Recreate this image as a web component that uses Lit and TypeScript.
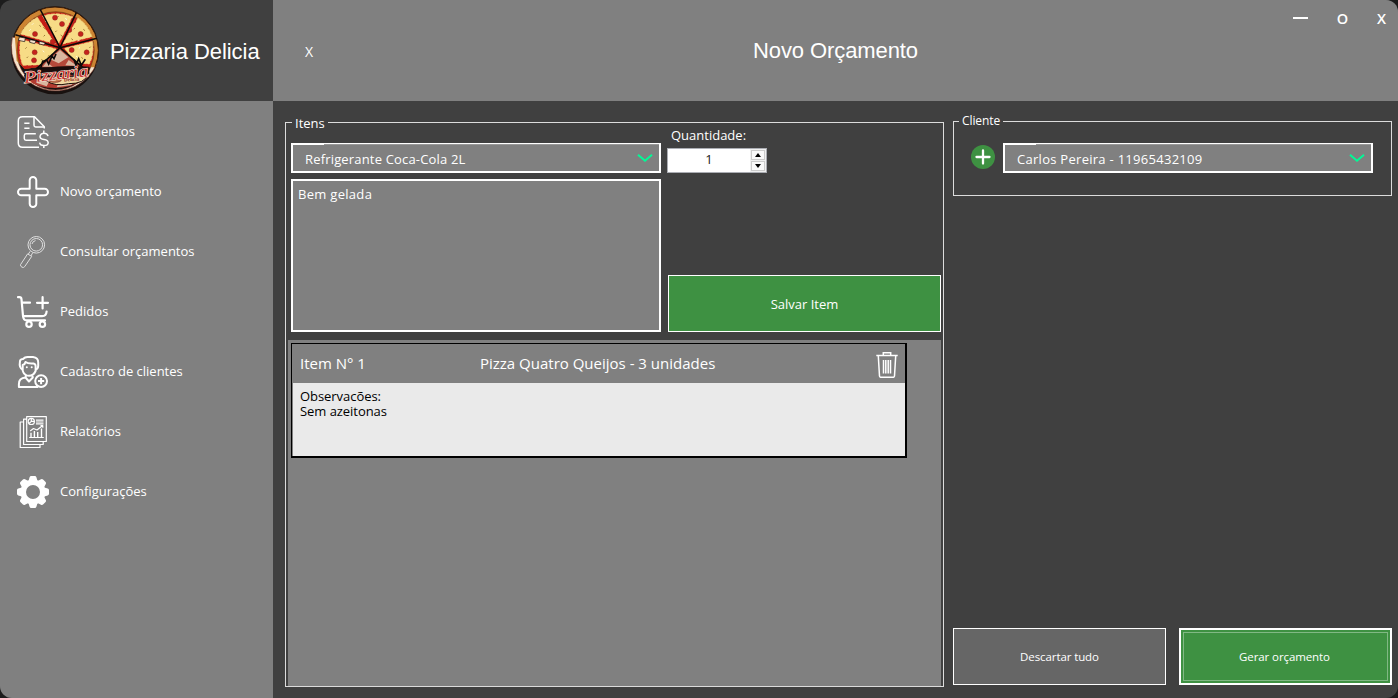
import { LitElement, html, css, svg } from "lit";
import { customElement, property } from "lit/decorators.js";

const icons: Record<string, unknown> = {
  budget: svg`<g stroke-width="1.5"><path d="M22 31.2H5.500Q1.300 31.200 1.300 27V5Q1.300.8 5.500.8H17.500L27.300 10.800V12.500"/><path d="M17 1V9.300Q17 11 18.700 11H27M7.300 7.300H12.500M7.300 12.300H12.500M18.800 17.800H9Q7.300 17.800 7.300 19.500V22.500Q7.300 24.200 9 24.200H20"/><path d="M31 20.200Q30.500 17.200 27 17.200T23 20.500Q23 23 27 23.500T31.200 26.700Q31 29.600 27 29.600T22.700 26.700M26.800 14.500V17M26.800 29.800V32"/></g>`,
  plus: svg`<path stroke-width="2" d="M12.700 4.300a3.300 3.300 0 0 1 6.600 0V12.700H27.700a3.300 3.300 0 0 1 0 6.600H19.300V27.700a3.300 3.300 0 0 1-6.600 0V19.300H4.300a3.300 3.300 0 0 1 0-6.600H12.700Z"/>`,
  search: svg`<g stroke-width="1" opacity=".75"><circle cx="19.300" cy="8.800" r="8.300"/><circle cx="19.300" cy="8.800" r="6.300"/><path d="M15 8Q15.500 5.300 18.500 4.600M13.200 15.300L11.200 18.300M15.700 16.700L13.900 20M10.600 17.900L14.700 20.400L7.700 30.600Q6.700 32 5 31.200T3.500 28.700Z"/></g>`,
  cart: svg`<g stroke-width="2.200" stroke-linecap="round"><path d="M1 1.200H2.500Q4.300 1.300 4.500 3.300L6 20Q6.400 24.400 9.500 24.400H28M5 6.700H13M7 20.200H25Q29.300 20 29.600 15.500M25.600 1.200V12.400M20 6.800H31"/><circle cx="12" cy="28.200" r="2.700"/><circle cx="25.400" cy="28.200" r="2.700"/></g>`,
  client: svg`<g stroke-width="2"><path d="M5.700 13.500Q1.800 12.500 3 5Q3.500 3 6 3Q8 .8 11 1H16Q21.300 1.500 21.200 6.500V10Q21 13 18.600 13.500"/><path d="M5.700 15V9Q8 8.500 8.500 6Q11 8 16.500 7.500Q18.600 8 18.600 10V15Q16.500 19.800 12 19.800T5.700 15M9 19L8.500 21.500L12 25.500L15.800 21.500L15.300 19M8.500 21.500Q1.900 22 1.900 28V31H21"/><circle cx="24.100" cy="25.100" r="5.900"/><path stroke-width="2" d="M24.100 22V28.200M21 25.100H27.200"/></g><circle cx="9.800" cy="11.300" r="1" fill="#fff" stroke="none"/><circle cx="14.700" cy="11.300" r="1" fill="#fff" stroke="none"/>`,
  report: svg`<g stroke-width="1.200"><path d="M9.700.6H29.300V25.500H9.700ZM9.500 3.100H6.600V28.500H26.200V25.800M6.500 6H3.200V31.500H23V28.700"/><circle cx="14.300" cy="5.400" r="3.100"/><path d="M14.300 2.500V5.400H17.300M14.300 5.400L12 7.500M19 4.200H26.500M19 6H26.500M19 7.800H26.500M12.200 21.500H26.800"/><path d="M13.200 15L16.500 12.500L20 14L25.700 9.500M23.500 9.500H25.800V11.800" /><path stroke-width="1.400" d="M14 21V16.800M17.400 21V15M20.700 21V16M24.500 21V12.500"/></g>`,
  gear: svg`<g stroke="none" fill="#fff"><path fill-rule="evenodd" d="M16 3.500a12.500 12.500 0 1 0 0 25a12.500 12.500 0 1 0 0-25M16 9a7 7 0 1 1 0 14a7 7 0 1 1 0-14"/>${[0, 45, 90, 135, 180, 225, 270, 315].map(
    (a) => svg`<path transform="rotate(${a} 16 16)" d="M11 6.500L12.600 1.300Q13 0 14.200 0H17.800Q19 0 19.400 1.300L21 6.500Z"/>`
  )}</g>`,
};

@customElement("app-icon")
class AppIcon extends LitElement {
  @property() name = "";
  static styles = css`
    :host { display: block; width: 32px; height: 32px; }
    svg { display: block; fill: none; stroke: #fff; stroke-linejoin: round; overflow: visible; }
  `;
  render() {
    return html`<svg width="32" height="32" viewBox="0 0 32 32">${icons[this.name]}</svg>`;
  }
}

@customElement("pizza-logo")
class PizzaLogo extends LitElement {
  static styles = css`
    :host { display: block; width: 104px; height: 101px; }
    svg { display: block; }
    .name { font: italic 50px "Liberation Serif", serif; fill: #c6312c; stroke: #f0d8c8; stroke-width: 4px; paint-order: stroke; }
    .sub { font: bold 15px "Liberation Serif", serif; fill: #8f2019; }
  `;
  render() {
    const slices = [
      "M128 48L176 130L218 50Q172 34 128 48Z",
      "M112 52L166 132L62 102Q78 68 112 52Z",
      "M234 54L188 132L276 110Q264 75 234 54Z",
      "M62 118L168 147L140 194L68 196Q54 160 62 118Z",
      "M194 145L278 124Q282 165 268 192L226 188Z",
    ];
    const tops = [[165, 53], [186, 72], [105, 102], [158, 125], [220, 62], [208, 90], [242, 102], [104, 157], [102, 181], [215, 150], [260, 157]];
    const specks = [[140, 62], [150, 80], [176, 48], [196, 55], [170, 92], [130, 82], [92, 88], [118, 76], [135, 105], [88, 116], [225, 84], [250, 88], [238, 120], [214, 116], [80, 142], [128, 152], [84, 170], [124, 178], [240, 142], [244, 172], [272, 140], [228, 168], [148, 165], [182, 105], [100, 70]];
    return html`<svg width="104" height="102" viewBox="0 0 312 306">
      <defs><clipPath id="pie"><path d="M0 0H312V202H226L180 145L140 197L74 207L50 182L44 103L0 90Z" /></clipPath></defs>
      <circle cx="165" cy="151" r="132" fill="#18110f" />
      <path d="M37 112A133 133 0 0 0 291 188L276 192A116 116 0 0 1 57 192Q46 150 52 112Z" fill="#f5e3cb" stroke="#6c3129" stroke-width="2" />
      <circle cx="165" cy="162" r="104" fill="#241613" />
      <g clip-path="url(#pie)">
        <circle cx="165" cy="151" r="130" fill="#cd8432" stroke="#3a1c0a" stroke-width="3" />
        <circle cx="167" cy="151" r="117" fill="#8a4a1a" />
        <circle cx="167" cy="151" r="114" fill="#c41f17" />
        ${slices.map((d) => svg`<path d="${d}" fill="#f7dc86" stroke="#f7dc86" stroke-width="2" stroke-dasharray="11 4" stroke-linejoin="round"/>`)}
      </g>
      ${specks.map(([x, y], i) => svg`<path d="M${x} ${y}l${i % 2 ? 5 : -4} 4" stroke="${i % 3 ? "#a07c38" : "#fffbe6"}" stroke-width="3"/>`)}
      ${tops.map(([x, y]) => svg`<circle cx="${x}" cy="${y}" r="7.500" fill="#c5221c" stroke="#8c2a1c" stroke-width="1.500"/>`)}
      <path d="M121 29L180 143L229 38M180 143L291 115M180 143L46 104" fill="none" stroke="#0d0908" stroke-width="4.500" />
      <path d="M58 111L76 114L74 125L55 121ZM90 119L108 122L104 131L89 127ZM118 124L136 128L132 135L117 132Z" fill="#f5e3cb" stroke="#0d0908" stroke-width="2" />
      <path d="M180 143L112 204H250Z" fill="#b5493a" stroke="#0d0908" stroke-width="5" />
      <path d="M180 150L150 178L176 190L205 172ZM140 186L128 200H158ZM206 180L196 196L232 198Z" fill="#d9b7a0" />
      <path d="M122 204L128 184L140 180L146 192L156 168L162 176L168 162M222 178L228 196L236 176L244 196L256 178" fill="none" stroke="#0d0908" stroke-width="5" />
      <path d="M82 240Q115 264 165 264T254 238L205 222Z" fill="#b23b30" />
      <path d="M108 248L140 259L152 236L128 236ZM170 262L215 255L225 240L180 240Z" fill="#d9b7a0" />
      <path d="M140 243Q160 228 200 229T264 222Q255 252 205 251Q165 260 140 243Z" fill="#f1d6a1" stroke="#1b0d09" stroke-width="3" />
      <ellipse cx="164" cy="240" rx="20" ry="7" fill="#c87b54" stroke="#7b1e19" stroke-width="2" />
      <path d="M72 226Q140 190 268 200V222Q160 212 78 246Z" fill="#1b0d0b" />
      <text class="name" x="72" y="239" textLength="192" lengthAdjust="spacingAndGlyphs" transform="rotate(-6 168 220)">Pizzaria</text>
      <text class="sub" x="192" y="243" textLength="46" lengthAdjust="spacingAndGlyphs" transform="rotate(-4 215 240)">Delicia</text>
    </svg>`;
  }
}

@customElement("combo-box")
class ComboBox extends LitElement {
  @property() value = "";
  static styles = css`
    :host { display: flex; box-sizing: border-box; width: 370px; height: 30px; border: 2px solid #fff; border-top-width: 1px; background: linear-gradient(90deg, #fff 31px, #999 31px) top / 100% 1px no-repeat, #808080; align-items: center; justify-content: space-between; padding: 2px 6px 0 12px; }
    span { white-space: nowrap; }
    svg { display: block; margin-bottom: 1px; }
  `;
  render() {
    return html`<span>${this.value}</span>
      <svg width="16" height="10" viewBox="0 0 16 10"><path d="M1 1.800L8 7.700L15 1.800" fill="none" stroke="#00fa96" stroke-width="2" /></svg>`;
  }
}

const menu = [
  { icon: "budget", label: "Orçamentos" },
  { icon: "plus", label: "Novo orçamento" },
  { icon: "search", label: "Consultar orçamentos" },
  { icon: "cart", label: "Pedidos" },
  { icon: "client", label: "Cadastro de clientes" },
  { icon: "report", label: "Relatórios" },
  { icon: "gear", label: "Configurações" },
];

@customElement("app-root")
class AppRoot extends LitElement {
  static styles = css`
    :host { display: block; background: #1c1c1c; font: 13px/18px "Open Sans", "Noto Sans", sans-serif; color: #fff; }
    * { box-sizing: border-box; }
    .window { display: grid; grid-template: 101px 597px / 273px 1125px; width: 1398px; height: 698px; background: #404040; border-radius: 12px; overflow: hidden; }
    .brand { display: flex; align-items: center; }
    .brand h1 { margin: 2px 0 0 6px; font: 22px "Liberation Sans", sans-serif; letter-spacing: -0.05px; white-space: nowrap; }
    .top { background: #808080; display: grid; grid-template-columns: 30px 1fr 120px; padding-left: 22px; align-items: center; }
    .close-tab { font: 14px "Open Sans", sans-serif; padding-left: 10px; padding-top: 2px; }
    .top h2 { margin: 0; font: 22px "Liberation Sans", sans-serif; letter-spacing: -0.1px; text-align: center; padding-left: 68px; }
    .controls { align-self: start; display: flex; justify-content: space-between; padding: 9px 12px 0 15px; font-size: 14.5px; line-height: 20px; font-weight: 600; }
    .min { width: 15px; height: 2px; background: #fff; margin-top: 8px; }
    .side { background: #808080; display: flex; flex-direction: column; }
    .side a { display: flex; align-items: center; gap: 11px; height: 60px; padding: 2px 0 0 17px; color: #fff; }
    .side a span { margin-top: -2px; }
    .main { display: grid; grid-template-columns: 659px 439px; column-gap: 9px; padding: 21px 0 11px 12px; }
    fieldset { margin: 0; padding: 0 2px; border: 1px solid #dcdcdc; min-width: 0; }
    legend { line-height: 9px; height: 9px; padding: 0 3px; margin-left: 4px; }
    .items { height: 569px; margin-top: -4px; }
    .items legend { line-height: 11px; }
    .form { display: grid; grid-template-columns: 370px 273px; column-gap: 7px; padding-left: 3px; height: 205px; }
    .left { padding-top: 16px; display: flex; flex-direction: column; gap: 6px; letter-spacing: 0.17px; }
    .note { height: 153px; border: 2px solid #fff; background: #808080; padding: 4px 5px; letter-spacing: 0.3px; }
    .right { display: flex; flex-direction: column; }
    .right label { line-height: 17px; padding-left: 3px; height: 21px; }
    .num { width: 100px; height: 25px; margin-left: -1px; border: 1px solid #abadb3; background: #fff; color: #222; display: flex; justify-content: space-between; }
    .num span { width: 82px; text-align: center; line-height: 21px; }
    .spin { width: 16px; background: #f0f0f0; padding: 1px; display: flex; flex-direction: column; gap: 1px; }
    .spin i { flex: 1; border: 1px solid #ccc; background: #fafafa; display: grid; place-items: center; }
    .spin svg { display: block; }
    .btn { display: grid; place-items: center; height: 57px; border: 1px solid #fff; background: #3e9142; }
    .save { margin-top: auto; }
    .list { margin-top: 8px; height: 346px; background: #808080; padding: 3px; }
    .card { width: 616px; height: 115px; border: solid #000; border-width: 1px 2px 2px 1px; display: grid; grid-template-rows: 39px 1fr; }
    .head { display: grid; grid-template-columns: 180px 1fr 36px; align-items: center; padding-left: 8px; font-size: 15px; }
    .head span { margin-top: -2px; }
    .head svg { margin: 3px 0 0 7px; display: block; }
    .obs { margin-left: 1px; background: #eaeaea; color: #000; padding: 6px 7px; line-height: 15px; letter-spacing: -0.05px; }
    .rightcol { display: flex; flex-direction: column; justify-content: space-between; height: 568px; margin-top: -5px; }
    .client { height: 79px; font-size: 13px; }
    .client legend { font-size: 12px; letter-spacing: -0.1px; margin-left: 3px; line-height: 8px; }
    .client div { display: flex; gap: 8px; padding: 17px 0 0 15px; letter-spacing: 0.28px; }
    .add { display: block; margin-top: 2px; }
    .actions { display: grid; grid-template-columns: 213px 213px; gap: 13px; font-size: 11.5px; letter-spacing: -0.1px; }
    .discard { background: #666; }
    .go { border-width: 2px; padding: 2px; place-items: stretch; }
    .go span { border: 1px solid #81b884; display: grid; place-items: center; padding-right: 2px; }
  `;

  render() {
    return html`<div class="window">
      <div class="brand"><pizza-logo></pizza-logo><h1>Pizzaria Delicia</h1></div>
      <header class="top">
        <span class="close-tab">X</span>
        <h2>Novo Orçamento</h2>
        <div class="controls"><span class="min"></span><span>O</span><span>X</span></div>
      </header>
      <nav class="side">
        ${menu.map((m) => html`<a><app-icon name=${m.icon}></app-icon><span>${m.label}</span></a>`)}
      </nav>
      <main class="main">
        <fieldset class="items">
          <legend>Itens</legend>
          <div class="form">
            <div class="left">
              <combo-box value="Refrigerante Coca-Cola 2L"></combo-box>
              <div class="note">Bem gelada</div>
            </div>
            <div class="right">
              <label>Quantidade:</label>
              <div class="num">
                <span>1</span>
                <div class="spin">
                  <i><svg width="6" height="4"><path d="M0 4L3 0L6 4Z" /></svg></i>
                  <i><svg width="6" height="4"><path d="M0 0L3 4L6 0Z" /></svg></i>
                </div>
              </div>
              <div class="btn save">Salvar Item</div>
            </div>
          </div>
          <div class="list">
            <div class="card">
              <div class="head">
                <span>Item N° 1</span><span>Pizza Quatro Queijos - 3 unidades</span>
                <svg width="22" height="26" viewBox="0 0 22 26" fill="none" stroke="#fff" stroke-width="1.500">
                  <path d="M.3 3.600H21.700M7.300 3V.8H14.700V3M2.300 4L3.500 24Q3.600 25.300 5 25.300H17Q18.400 25.300 18.500 24L19.700 4M7.500 8V21.500M9.800 8V21.500M12.200 8V21.500M14.500 8V21.500" />
                </svg>
              </div>
              <div class="obs">Observacões:<br />Sem azeitonas</div>
            </div>
          </div>
        </fieldset>
        <div class="rightcol">
          <fieldset class="client">
            <legend>Cliente</legend>
            <div>
              <svg class="add" width="24" height="24"><circle cx="12" cy="12" r="12" fill="#3e9142" /><path d="M12 5.500V18.500M5.500 12H18.500" stroke="#fff" stroke-width="2.300" stroke-linecap="round" /></svg>
              <combo-box value="Carlos Pereira - 11965432109"></combo-box>
            </div>
          </fieldset>
          <div class="actions">
            <div class="btn discard">Descartar tudo</div>
            <div class="btn go"><span>Gerar orçamento</span></div>
          </div>
        </div>
      </main>
    </div>`;
  }
}
